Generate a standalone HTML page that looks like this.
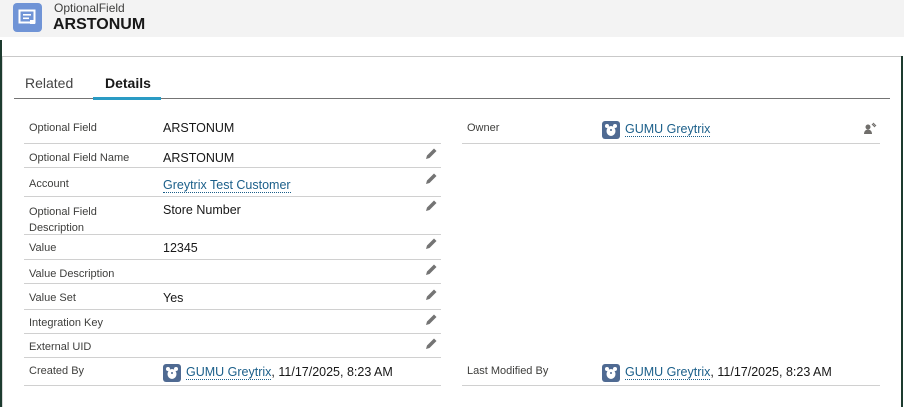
<!DOCTYPE html>
<html><head><style>
body{margin:0;width:904px;height:407px;background:#fff;font-family:"Liberation Sans",sans-serif;position:relative;overflow:hidden}
.a{position:absolute}
.hdr{left:0;top:0;width:904px;height:37px;background:#f3f3f3}
.lbl{font-size:11px;color:#3e3e3c}
.val{font-size:12.5px;color:#181818}
.ln{height:1px;background:#d0d0d0}
.lnk{color:#1b5f8a;border-bottom:1px dotted #1b5f8a}
.pen{width:14px;height:14px}
</style></head><body>
<div class="a hdr"></div>
<div class="a" style="left:13px;top:3px;width:29px;height:29px;background:#7094d6;border-radius:4px"></div>
<svg class="a" style="left:18px;top:9px" width="19" height="17" viewBox="0 0 19 17"><rect x="1.5" y="1.5" width="15" height="12" fill="none" stroke="#fff" stroke-width="2"/><rect x="5" y="5" width="8" height="1.6" fill="#fff"/><rect x="5" y="8.5" width="6" height="1.6" fill="#fff"/><rect x="12" y="11" width="5" height="4" fill="#fff"/></svg>
<div class="a" style="left:54px;top:1px;font-size:12px;color:#3e3e3c">OptionalField</div>
<div class="a" style="left:53px;top:16px;font-size:16px;font-weight:bold;color:#181818">ARSTONUM</div>
<div class="a" style="left:0;top:40px;width:2px;height:367px;background:#1d3b2f"></div>
<div class="a" style="left:901px;top:56px;width:2px;height:351px;background:#1d3b2f"></div>
<div class="a" style="left:2px;top:56px;width:899px;height:1px;background:#c9c9c9"></div>
<div class="a" style="left:2px;top:57px;width:1px;height:350px;background:#d8d8d8"></div>
<div class="a" style="left:25px;top:75px;font-size:14px;color:#444">Related</div>
<div class="a" style="left:105px;top:75px;font-size:14px;font-weight:bold;color:#181818">Details</div>
<div class="a" style="left:14px;top:98px;width:876px;height:1px;background:#747474"></div>
<div class="a" style="left:93px;top:97px;width:68px;height:3px;background:#2a9bc4"></div>

<div class="a lbl" style="left:29px;top:122px">Optional Field</div><div class="a val" style="left:163px;top:121px">ARSTONUM</div>
<div class="a ln" style="left:24px;top:143px;width:417px"></div>
<div class="a lbl" style="left:29px;top:152px">Optional Field Name</div><div class="a val" style="left:163px;top:151px">ARSTONUM</div>
<div class="a ln" style="left:24px;top:167px;width:417px"></div>
<div class="a lbl" style="left:29px;top:178px">Account</div><div class="a val" style="left:163px;top:178px"><span class="lnk">Greytrix Test Customer</span></div>
<div class="a ln" style="left:24px;top:196px;width:417px"></div>
<div class="a lbl" style="left:29px;top:204px;line-height:16px">Optional Field<br>Description</div><div class="a val" style="left:163px;top:203px">Store Number</div>
<div class="a ln" style="left:24px;top:234px;width:417px"></div>
<div class="a lbl" style="left:29px;top:242px">Value</div><div class="a val" style="left:163px;top:241px">12345</div>
<div class="a ln" style="left:24px;top:259px;width:417px"></div>
<div class="a lbl" style="left:29px;top:268px">Value Description</div>
<div class="a ln" style="left:24px;top:283px;width:417px"></div>
<div class="a lbl" style="left:29px;top:292px">Value Set</div><div class="a val" style="left:163px;top:291px">Yes</div>
<div class="a ln" style="left:24px;top:309px;width:417px"></div>
<div class="a lbl" style="left:29px;top:317px">Integration Key</div>
<div class="a ln" style="left:24px;top:333px;width:417px"></div>
<div class="a lbl" style="left:29px;top:341px">External UID</div>
<div class="a ln" style="left:24px;top:357px;width:417px"></div>
<div class="a lbl" style="left:29px;top:365px">Created By</div>
<div class="a val" style="left:186px;top:365px"><span class="lnk">GUMU Greytrix</span>, 11/17/2025, 8:23 AM</div>
<div class="a ln" style="left:24px;top:385px;width:417px"></div>

<div class="a lbl" style="left:467px;top:122px">Owner</div>
<div class="a val" style="left:625px;top:122px"><span class="lnk">GUMU Greytrix</span></div>
<div class="a ln" style="left:462px;top:143px;width:418px"></div>
<div class="a lbl" style="left:467px;top:365px">Last Modified By</div>
<div class="a val" style="left:625px;top:365px"><span class="lnk">GUMU Greytrix</span>, 11/17/2025, 8:23 AM</div>
<div class="a ln" style="left:462px;top:385px;width:418px"></div>
<svg class="a" style="left:863px;top:122px" width="14" height="13" viewBox="0 0 14 13"><circle cx="5" cy="5" r="2.5" fill="#706e6b"/><path d="M1 12c0-3 2-4.5 4-4.5s4 1.5 4 4.5z" fill="#706e6b"/><path d="M9 2l3 3M10 1l3 3" stroke="#706e6b" stroke-width="1.2"/></svg>

<svg class="a" style="left:163px;top:364px" width="18" height="18" viewBox="0 0 18 18"><rect width="18" height="18" rx="3" fill="#4f6a92"/><circle cx="5" cy="5" r="2" fill="#fff"/><circle cx="13" cy="5" r="2" fill="#fff"/><ellipse cx="9" cy="10" rx="4.5" ry="5" fill="#fff"/><circle cx="9" cy="9" r="1" fill="#4f6a92"/></svg>
<svg class="a" style="left:602px;top:121px" width="18" height="18" viewBox="0 0 18 18"><rect width="18" height="18" rx="3" fill="#4f6a92"/><circle cx="5" cy="5" r="2" fill="#fff"/><circle cx="13" cy="5" r="2" fill="#fff"/><ellipse cx="9" cy="10" rx="4.5" ry="5" fill="#fff"/><circle cx="9" cy="9" r="1" fill="#4f6a92"/></svg>
<svg class="a" style="left:602px;top:364px" width="18" height="18" viewBox="0 0 18 18"><rect width="18" height="18" rx="3" fill="#4f6a92"/><circle cx="5" cy="5" r="2" fill="#fff"/><circle cx="13" cy="5" r="2" fill="#fff"/><ellipse cx="9" cy="10" rx="4.5" ry="5" fill="#fff"/><circle cx="9" cy="9" r="1" fill="#4f6a92"/></svg>

<svg width="0" height="0" style="position:absolute"><defs><symbol id="p" viewBox="0 0 14 14"><path d="M2 12l1-3.5 7-7 2.5 2.5-7 7z" fill="#747474"/></symbol></defs></svg>
<svg class="a pen" style="left:424px;top:147px"><use href="#p"/></svg>
<svg class="a pen" style="left:424px;top:172px"><use href="#p"/></svg>
<svg class="a pen" style="left:424px;top:199px"><use href="#p"/></svg>
<svg class="a pen" style="left:424px;top:237px"><use href="#p"/></svg>
<svg class="a pen" style="left:424px;top:263px"><use href="#p"/></svg>
<svg class="a pen" style="left:424px;top:288px"><use href="#p"/></svg>
<svg class="a pen" style="left:424px;top:313px"><use href="#p"/></svg>
<svg class="a pen" style="left:424px;top:337px"><use href="#p"/></svg>
</body></html>
